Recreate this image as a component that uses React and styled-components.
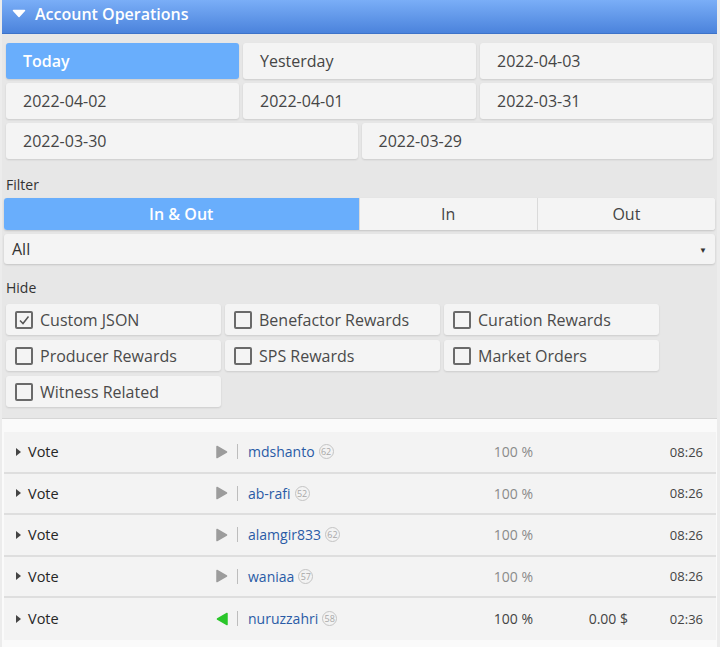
import styled, { createGlobalStyle } from "styled-components";

const GlobalStyle = createGlobalStyle`
  body {
    margin: 0;
    background: #ececec;
    font-family: "Open Sans", "Noto Sans", sans-serif;
  }
`;

const DATES = [
  { label: "Today", span: 2, active: true },
  { label: "Yesterday", span: 2 },
  { label: "2022-04-03", span: 2 },
  { label: "2022-04-02", span: 2 },
  { label: "2022-04-01", span: 2 },
  { label: "2022-03-31", span: 2 },
  { label: "2022-03-30", span: 3 },
  { label: "2022-03-29", span: 3 },
];

const FILTERS = [
  { label: "In & Out", grow: 2, active: true },
  { label: "In", grow: 1 },
  { label: "Out", grow: 1 },
];

const HIDE = [
  { label: "Custom JSON", checked: true },
  { label: "Benefactor Rewards" },
  { label: "Curation Rewards" },
  { label: "Producer Rewards" },
  { label: "SPS Rewards" },
  { label: "Market Orders" },
  { label: "Witness Related" },
];

const OPS = [
  { user: "mdshanto", rep: 62, pct: "100 %", time: "08:26" },
  { user: "ab-rafi", rep: 52, pct: "100 %", time: "08:26" },
  { user: "alamgir833", rep: 62, pct: "100 %", time: "08:26" },
  { user: "waniaa", rep: 57, pct: "100 %", time: "08:26" },
  { user: "nuruzzahri", rep: 58, pct: "100 %", value: "0.00 $", time: "02:36", incoming: true },
];

const Wrapper = styled.div`
  margin: 0 3px 0 2px;
  background: #e7e7e7;
`;

const Header = styled.div`
  height: 34px;
  display: flex;
  align-items: center;
  gap: 9px;
  padding: 0 10px 6px;
  box-sizing: border-box;
  background: linear-gradient(#7aaef7, #4b83dc);
  border-bottom: 1px solid #3d73c9;
  color: #fff;
  font-size: 16px;
  font-weight: 600;
`;

const Caret = styled.svg`
  flex: none;
`;

const Panel = styled.div`
  padding: 9px 2px 0 2px;
  border-bottom: 1px solid #d6d6d6;
`;

const DateGrid = styled.div`
  display: grid;
  grid-template-columns: repeat(6, 1fr);
  gap: 4px;
  padding: 0 2px;
`;

const DateButton = styled.div`
  grid-column: span ${(p) => p.$span};
  height: 36px;
  display: flex;
  align-items: center;
  padding-left: 17px;
  border-radius: 3px;
  font-size: 16px;
  font-weight: ${(p) => (p.$active ? 600 : 400)};
  color: ${(p) => (p.$active ? "#fff" : "#454545")};
  background: ${(p) => (p.$active ? "#69aefc" : "#f4f4f4")};
  box-shadow: 0 1px 2px rgba(0, 0, 0, 0.12);
`;

const Label = styled.div`
  font-size: 14px;
  line-height: 18px;
  color: #333;
  padding: ${(p) => p.$pad || "17px 2px 4px"};
`;

const Segmented = styled.div`
  display: flex;
  height: 32px;
  border-radius: 3px;
  background: #f4f4f4;
  box-shadow: 0 1px 2px rgba(0, 0, 0, 0.15);
  overflow: hidden;
`;

const Segment = styled.div`
  flex: ${(p) => p.$grow};
  display: flex;
  align-items: center;
  justify-content: center;
  font-size: 16px;
  font-weight: ${(p) => (p.$active ? 600 : 400)};
  color: ${(p) => (p.$active ? "#fff" : "#444")};
  background: ${(p) => (p.$active ? "#69aefc" : "#f4f4f4")};
  & + & {
    border-left: 1px solid #dadada;
  }
`;

const Select = styled.div`
  margin-top: 4px;
  height: 30px;
  display: flex;
  align-items: center;
  justify-content: space-between;
  padding: 0 8px 0 8px;
  border-radius: 3px;
  background: #f4f4f4;
  box-shadow: 0 1px 2px rgba(0, 0, 0, 0.15);
  font-size: 16px;
  color: #333;
`;

const SelectArrow = styled.span`
  font-size: 8px;
  color: #333;
`;

const CheckGrid = styled.div`
  display: grid;
  grid-template-columns: repeat(3, 215px);
  gap: 5px 4px;
  padding: 0 2px 11px;
`;

const CheckItem = styled.label`
  height: 31px;
  display: flex;
  align-items: center;
  gap: 7px;
  padding-left: 9px;
  border-radius: 3px;
  background: #f4f4f4;
  box-shadow: 0 1px 2px rgba(0, 0, 0, 0.12);
  font-size: 16px;
  color: #4a4a4a;
`;

const Box = styled.span`
  width: 14px;
  height: 14px;
  border: 2px solid #6a6a6a;
  border-radius: 2px;
  display: flex;
  align-items: center;
  justify-content: center;
`;

const List = styled.div`
  background: #fafafa;
  padding: 13px 0 8px;
`;

const Row = styled.div`
  height: 41.5px;
  box-sizing: border-box;
  display: grid;
  grid-template-columns: 200px 21px 11px 225px 60px 95px 75px;
  align-items: center;
  padding: 0 13px 0 12px;
  margin: 0 1px 0 2px;
  background: #f3f3f3;
  border-bottom: 2px solid #dedede;
  font-size: 14px;
  &:last-child {
    border-bottom: none;
  }
`;

const OpType = styled.div`
  display: flex;
  align-items: center;
  gap: 7px;
  color: #262626;
  font-size: 14.5px;
`;

const Pointer = styled.span`
  width: 0;
  height: 0;
  border-top: 4px solid transparent;
  border-bottom: 4px solid transparent;
  border-left: 5px solid #444;
`;

const Sep = styled.span`
  width: 1px;
  height: 15px;
  background: #bdbdbd;
`;

const User = styled.div`
  display: flex;
  align-items: center;
  gap: 4px;
  color: #2a5ba6;
`;

const Rep = styled.span`
  width: 15px;
  height: 15px;
  box-sizing: border-box;
  border: 1px solid #c4c4c4;
  border-radius: 50%;
  font-size: 9px;
  color: #a8a8a8;
  display: flex;
  align-items: center;
  justify-content: center;
`;

const Cell = styled.div`
  text-align: right;
  color: ${(p) => p.$color || "#444"};
  font-size: ${(p) => p.$size || "14px"};
`;

const Direction = ({ incoming }) => (
  <svg width="12" height="14" viewBox="0 0 12 14">
    {incoming ? (
      <path d="M11 1.5 L1.5 7 L11 12.5 Z" fill="#2ac62a" stroke="#2ac62a" strokeWidth="1.5" strokeLinejoin="round" />
    ) : (
      <path d="M1 1.5 L10.5 7 L1 12.5 Z" fill="#9c9c9c" stroke="#9c9c9c" strokeWidth="1.5" strokeLinejoin="round" />
    )}
  </svg>
);

const Check = () => (
  <svg width="12" height="12" viewBox="0 0 12 12">
    <path d="M2 6.5 L5 9.5 L10.5 2.5" fill="none" stroke="#555" strokeWidth="1.5" />
  </svg>
);

export default function App() {
  return (
    <>
      <GlobalStyle />
      <Wrapper>
        <Header>
          <Caret width="14" height="9" viewBox="0 0 14 9">
            <path d="M1.5 1.5 H12.5 L7 7.5 Z" fill="#fff" stroke="#fff" strokeWidth="1.5" strokeLinejoin="round" />
          </Caret>
          Account Operations
        </Header>
        <Panel>
          <DateGrid>
            {DATES.map((d) => (
              <DateButton key={d.label} $span={d.span} $active={d.active}>
                {d.label}
              </DateButton>
            ))}
          </DateGrid>

          <Label>Filter</Label>
          <Segmented>
            {FILTERS.map((f) => (
              <Segment key={f.label} $grow={f.grow} $active={f.active}>
                {f.label}
              </Segment>
            ))}
          </Segmented>
          <Select>
            All
            <SelectArrow>▼</SelectArrow>
          </Select>

          <Label $pad="15px 2px 7px">Hide</Label>
          <CheckGrid>
            {HIDE.map((h) => (
              <CheckItem key={h.label}>
                <Box>{h.checked && <Check />}</Box>
                {h.label}
              </CheckItem>
            ))}
          </CheckGrid>
        </Panel>

        <List>
          {OPS.map((op) => (
            <Row key={op.user}>
              <OpType>
                <Pointer />
                Vote
              </OpType>
              <Direction incoming={op.incoming} />
              <Sep />
              <User>
                {op.user}
                <Rep>{op.rep}</Rep>
              </User>
              <Cell $color={op.incoming ? "#444" : "#8a8a8a"}>{op.pct}</Cell>
              <Cell>{op.value}</Cell>
              <Cell $size="13px">{op.time}</Cell>
            </Row>
          ))}
        </List>
      </Wrapper>
    </>
  );
}
